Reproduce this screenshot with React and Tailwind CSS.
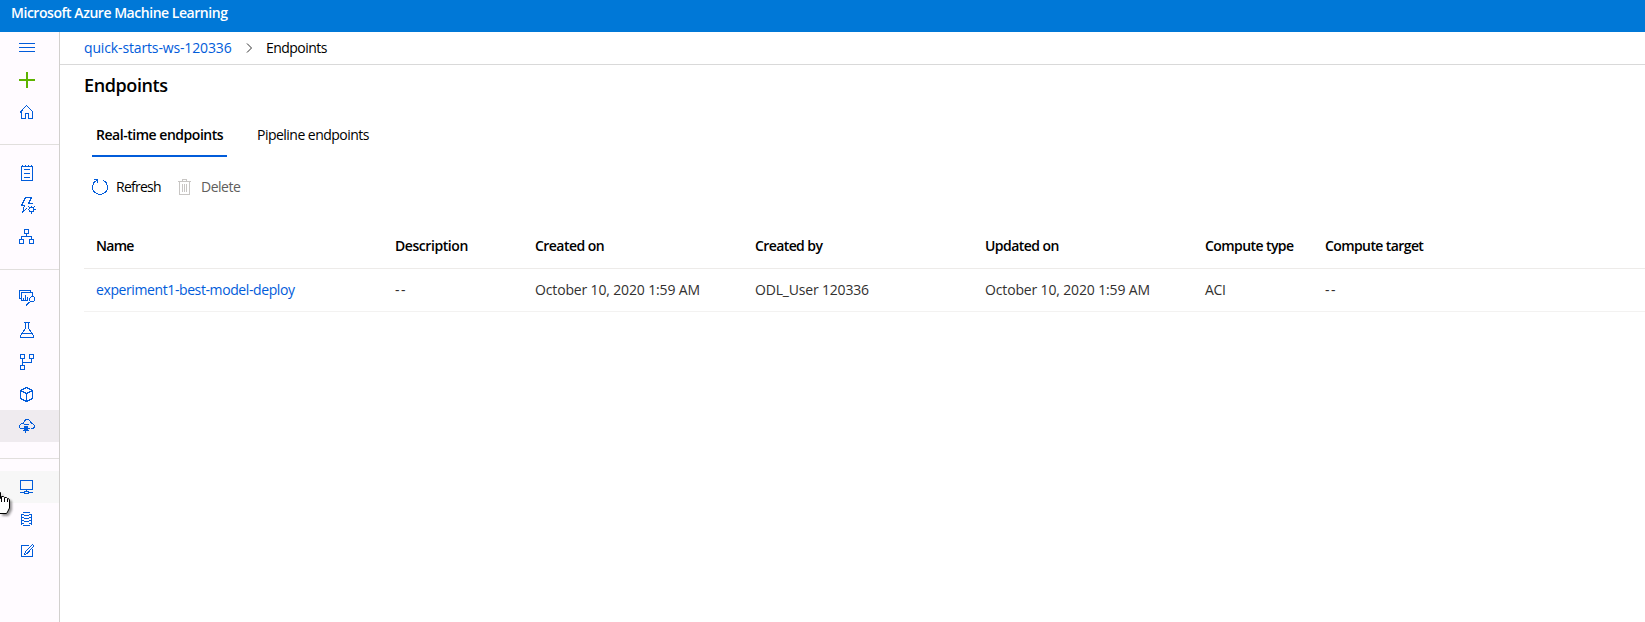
const IconCell = ({ children, className = "" }) => (
  <a className={`block h-8 w-[59px] ${className}`}>
    <svg
      width="59"
      height="32"
      viewBox="0 0 59 32"
      fill="none"
      stroke="#015cda"
      strokeWidth="1"
      shapeRendering="crispEdges"
    >
      {children}
    </svg>
  </a>
);

const Divider = () => <div className="mt-4 mb-3 h-px w-[59px] bg-[#e1dfdd]" />;

const Sidebar = () => (
  <nav className="relative flex w-[60px] shrink-0 flex-col border-r border-[#d2d0ce] bg-[#fffbff]">
    <IconCell>
      <path d="M19 11.5H35M19 15.5H35M19 19.5H35" />
    </IconCell>
    <IconCell>
      <path d="M19 16H35M27 8V24" stroke="#5db300" strokeWidth="2" />
    </IconCell>
    <IconCell>
      <path d="M20 16.5L26.5 9.5L33.5 16.5M21.5 15V22.5H25.5V17.5H28.5V22.5H32.5V15" />
    </IconCell>
    <Divider />
    <IconCell>
      <path d="M21.5 9.5H32.5V23.5H21.5ZM24 12.5H30M24 16.5H30M24 20.5H30M22.5 8V10M25.5 8V10M28.5 8V10M31.5 8V10" />
    </IconCell>
    <IconCell>
      <path d="M31.5 8.5H25.5L21.5 16.5H24.5L22.5 23.5L27 19M31.5 8.5L28.5 14.5H33" />
      <circle cx="31.5" cy="20.5" r="2.5" />
      <path d="M31.5 16.5V18M31.5 23V24.5M27.5 20.5H29M34 20.5H35.5M28.5 17.5L30 19M33 22L34.5 23.5M28.5 23.5L30 22M33 19L34.5 17.5" />
    </IconCell>
    <IconCell>
      <path d="M24.5 8.5H28.5V12.5H24.5ZM19.5 18.5H23.5V22.5H19.5ZM29.5 18.5H33.5V22.5H29.5ZM26.5 12.5V15.5M21.5 18.5V15.5H31.5V18.5" />
    </IconCell>
    <Divider />
    <IconCell>
      <path d="M21.5 16.5H19.5V8.5H30.5V10.5M28 18.5H21.5V10.5H32.5V14M23.5 16V18M25.5 13V18M27.5 15V18" />
      <path d="M30.5 15.5L31.5 14.5H33.5L34.5 15.5V18.5L33.5 19.5H30.5L29.5 18.5V16.5Z" />
      <path d="M29.5 20L26 23.5" />
    </IconCell>
    <IconCell>
      <path d="M24 8.5H30M25.5 8.5V14L20.5 22V23.5H33.5V22L28.5 14V8.5M23 19.5H31" />
    </IconCell>
    <IconCell>
      <path d="M20.5 8.5H24.5V12.5H20.5ZM29.5 8.5H33.5V12.5H29.5ZM20.5 19.5H24.5V23.5H20.5ZM22.5 12.5V19.5M22.5 16.5H31.5V12.5" />
    </IconCell>
    <IconCell>
      <path d="M26.5 9.5L32.5 12.5V20.5L26.5 23.5L20.5 20.5V12.5ZM20.5 12.5L26.5 15.5L32.5 12.5M26.5 15.5V23.5" />
    </IconCell>
    <IconCell className="bg-[#efebef]">
      <path d="M22 18.5H20.5L19.5 17.5V15.5L21.5 13.5H23.5L24.5 10.5L26.5 9.5H28.5L30.5 11.5L31.5 13.5H32.5L34.5 15.5V17.5L32.5 18.5H31" />
      <path d="M24 14.5H28.5M21 18.5H24M23 20.5H28.5M25.5 20V22.5M28 18.5H30" />
      <rect x="24" y="16" width="4" height="4" fill="#015cda" stroke="none" />
    </IconCell>
    <Divider />
    <IconCell className="bg-[#f7f7f7]">
      <path d="M20.5 9.5H32.5V18.5H20.5ZM26.5 18.5V20.5M20 21.5H24.5M28.5 21.5H33M24.5 20.5H28.5V22.5H24.5Z" />
    </IconCell>
    <IconCell>
      <path d="M23 9.5H30M21.5 10.5V21.5M31.5 10.5V21.5M23 22.5H30M22 11.5H24M29 11.5H31M24 12.5H29M22 14.5H24M29 14.5H31M24 15.5H29M22 17.5H24M29 17.5H31M24 18.5H29M22 20.5H24M29 20.5H31" />
    </IconCell>
    <IconCell>
      <path d="M29 10.5H21.5V21.5H32.5V14M24.5 19.5L25.5 16.5L32.5 9.5L34 11L27 18.5ZM25 17L27 19" />
    </IconCell>
    <svg
      className="absolute left-0 top-[457px] drop-shadow-[2px_2px_1px_rgba(0,0,0,0.4)]"
      width="16"
      height="30"
      viewBox="0 0 16 30"
    >
      <path
        d="M-1 3.5H0.5V9.5L1.5 7.5H3.5L4.5 8.5H6.5L7.5 9.5H8.5L9.5 11V19L8.5 21L7.5 23L6.5 24.5H-1Z"
        fill="#fff"
        stroke="#000"
      />
      <path d="M1.5 8V13M4.5 9V13M7.5 10V13" stroke="#000" />
    </svg>
  </nav>
);

const columns = [
  ["Name", "experiment1-best-model-deploy", "w-[299px]", "tracking-[-0.7px]", "tracking-[-0.4px]"],
  ["Description", "--", "w-[140px]", "tracking-[-0.43px]", "tracking-[1.5px]"],
  ["Created on", "October 10, 2020 1:59 AM", "w-[220px]", "tracking-[-0.55px]", "tracking-[-0.15px]"],
  ["Created by", "ODL_User 120336", "w-[230px]", "tracking-[-0.6px]", "tracking-[-0.18px]"],
  ["Updated on", "October 10, 2020 1:59 AM", "w-[220px]", "tracking-[-0.54px]", "tracking-[-0.15px]"],
  ["Compute type", "ACI", "w-[120px]", "tracking-[-0.58px]", "tracking-[-0.3px]"],
  ["Compute target", "--", "w-[160px]", "tracking-[-0.6px]", "tracking-[1.5px]"],
];

export default function App() {
  return (
    <div className="flex h-[622px] w-[1645px] flex-col overflow-hidden bg-white font-['Open_Sans','Noto_Sans',sans-serif] text-sm leading-5 whitespace-nowrap text-black">
      <header className="h-8 shrink-0 bg-[#0078d7] pt-[3px] pl-[11px] font-semibold tracking-[-0.46px] text-white">
        Microsoft Azure Machine Learning
      </header>
      <div className="flex min-h-0 flex-1">
        <Sidebar />
        <main className="flex min-w-0 flex-1 flex-col">
          <div className="flex h-[33px] shrink-0 border-b border-[#d9d9d9] pt-1.5 pl-6">
            <a className="w-[161px] tracking-[-0.14px] text-[#015cda]">quick-starts-ws-120336</a>
            <svg className="mt-1 w-[20px]" width="20" height="12" viewBox="0 0 20 12" fill="none" stroke="#333">
              <path d="M2 1.5L6.5 6L2 10.5" />
            </svg>
            <span className="ml-px tracking-[-0.55px]">Endpoints</span>
          </div>
          <h1 className="mt-2 h-6 pl-6 text-lg leading-6 font-semibold tracking-[-0.4px]">Endpoints</h1>
          <div className="mt-[22px] flex h-[38px] pl-8">
            <div className="w-[135px] border-b-2 border-[#015cda] pt-[6px] pl-1 font-semibold tracking-[-0.47px]">
              Real-time endpoints
            </div>
            <div className="pt-[6px] pl-[30px] tracking-[-0.52px]">Pipeline endpoints</div>
          </div>
          <div className="mt-5 flex h-5 pl-8">
            <svg width="24" height="20" viewBox="0 0 24 20" fill="none" stroke="#015cda" shapeRendering="crispEdges">
              <path d="M11.5 3.37A7.5 7.5 0 1 1 4.5 3.37M2 2.5H5.5V6" />
            </svg>
            <span className="w-[62px] tracking-[-0.75px]">Refresh</span>
            <svg width="23" height="20" viewBox="0 0 23 20" fill="none" stroke="#c8c6c4" shapeRendering="crispEdges">
              <path d="M0 4.5H13M4.5 4V2.5H8.5V4M1.5 5V17.5H11.5V5M4.5 7V15M6.5 7V15M8.5 7V15" />
            </svg>
            <span className="tracking-[-0.5px] text-[#605e5c]">Delete</span>
          </div>
          <div className="mt-[29px] ml-6 flex h-[43px] border-b border-[#edebe9] pt-2.5 pl-3 font-semibold">
            {columns.map(([head, , width, tracking]) => (
              <div key={head} className={`${width} ${tracking}`}>{head}</div>
            ))}
          </div>
          <div className="ml-6 flex h-[43px] border-b border-[#f3f2f1] pt-[11px] pl-3 text-[#323130]">
            {columns.map(([head, value, width, , tracking], i) => (
              <div key={head} className={`${width} ${tracking} ${i === 0 ? "text-[#015cda]" : ""}`}>{value}</div>
            ))}
          </div>
        </main>
      </div>
    </div>
  );
}
